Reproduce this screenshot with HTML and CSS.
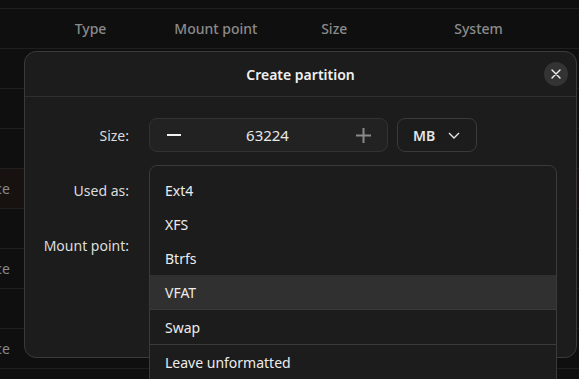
FILE: index.html
```html
<!DOCTYPE html>
<html>
<head>
<meta charset="utf-8">
<link rel="stylesheet" href="styles.css">
</head>
<body>
<div class="table">
  <div class="row head">
    <div class="cell c0"></div>
    <div class="cell c1">Type</div>
    <div class="cell c2">Mount point</div>
    <div class="cell c3">Size</div>
    <div class="cell c4">System</div>
  </div>
  <div class="row"></div>
  <div class="row"></div>
  <div class="row"></div>
  <div class="row sel"><div class="cell c0 clip">Free space</div></div>
  <div class="row"></div>
  <div class="row"><div class="cell c0 clip">Free space</div></div>
  <div class="row"></div>
  <div class="row"><div class="cell c0 clip">Free space</div></div>
  <div class="row short"></div>
</div>

<div class="dialog">
  <div class="dlg-head">
    <div class="dlg-title">Create partition</div>
    <button class="close" aria-label="Close">
      <svg width="10" height="10" viewBox="0 0 10 10"><path d="M1 1L9 9M9 1L1 9" stroke="#f2f2f2" stroke-width="1.4" stroke-linecap="round"/></svg>
    </button>
  </div>
  <div class="form">
    <div class="label">Size:</div>
    <div class="ctrls">
      <div class="spin">
        <span class="minus"></span>
        <span class="value">63224</span>
        <svg class="plus" width="15" height="15" viewBox="0 0 15 15"><path d="M7.5 0V15M0 7.5H15" stroke="#8a8a8a" stroke-width="2"/></svg>
      </div>
      <div class="unit">
        <span>MB</span>
        <svg width="12" height="7" viewBox="0 0 12 7"><path d="M1 1L6 6L11 1" fill="none" stroke="#e6e6e6" stroke-width="1.4"/></svg>
      </div>
    </div>
    <div class="label">Used as:</div>
    <div class="ctrl-empty"></div>
    <div class="label">Mount point:</div>
    <div class="ctrl-empty"></div>
  </div>
</div>

<div class="popup">
  <div class="item">Ext4</div>
  <div class="item">XFS</div>
  <div class="item">Btrfs</div>
  <div class="item hover">VFAT</div>
  <div class="item">Swap</div>
  <div class="sep"></div>
  <div class="item">Leave unformatted</div>
</div>
</body>
</html>
```

FILE: styles.css
```css
* { box-sizing: border-box; }
html, body {
  margin: 0;
  padding: 0;
  width: 579px;
  height: 379px;
  overflow: hidden;
  background: #0f0f0f;
  font-family: "Noto Sans", "Open Sans", sans-serif;
  font-size: 14px;
  color: #e6e6e6;
}
.table {
  padding-top: 8px;
}
.table .row {
  display: flex;
  height: 40px;
  border-top: 1px solid #1f1f1f;
  align-items: center;
}
.table .row.short { height: 4px; }
.row.head {
  color: #8a8a8a;
  font-weight: 500;
}
.row.sel { background: #17120f; }
.cell { text-align: center; white-space: nowrap; }
.c0 { width: 40px; }
.c1 { width: 102px; }
.c2 { width: 150px; }
.c3 { width: 88px; }
.c4 { width: 202px; }
.clip {
  width: 80px;
  margin-left: -70px;
  text-align: right;
  color: #8a8a8a;
}

.dialog {
  position: absolute;
  left: 24px;
  top: 51px;
  width: 553px;
  height: 307px;
  background: #1c1c1c;
  border: 1px solid #3a3a3a;
  border-radius: 12px;
}
.dlg-head {
  position: relative;
  height: 45px;
  border-bottom: 1px solid #2f2f2f;
  display: flex;
  align-items: center;
  justify-content: center;
}
.dlg-title {
  font-weight: 600;
  font-size: 14px;
  color: #f0f0f0;
}
.close {
  position: absolute;
  right: 8px;
  top: 10px;
  width: 24px;
  height: 24px;
  border-radius: 50%;
  border: 0;
  padding: 0;
  background: #333333;
  display: flex;
  align-items: center;
  justify-content: center;
}
.form {
  display: grid;
  grid-template-columns: 104px 1fr;
  column-gap: 20px;
  row-gap: 21px;
  padding-top: 21px;
}
.label {
  height: 34px;
  display: flex;
  align-items: center;
  justify-content: flex-end;
  color: #dcdcdc;
}
.ctrls {
  display: flex;
  gap: 9px;
}
.ctrl-empty { height: 34px; }
.spin {
  width: 239px;
  height: 34px;
  background: #222222;
  border: 1px solid #333333;
  border-radius: 8px;
  display: flex;
  align-items: center;
  padding: 0 16px 0 17px;
}
.minus {
  width: 14px;
  height: 2px;
  background: #f2f2f2;
}
.value {
  flex: 1;
  text-align: center;
  font-size: 15px;
  color: #e8e8e8;
  padding-right: 2px;
}
.unit {
  width: 80px;
  height: 34px;
  border: 1px solid #3a3a3a;
  border-radius: 8px;
  display: flex;
  align-items: center;
  gap: 13px;
  padding-left: 15px;
  font-weight: 600;
  font-size: 14px;
}

.popup {
  position: absolute;
  left: 149px;
  top: 165px;
  width: 408px;
  height: 230px;
  background: #1c1c1c;
  border: 1px solid #3a3a3a;
  border-radius: 8px 8px 0 0;
  padding-top: 7px;
}
.item {
  height: 34px;
  display: flex;
  align-items: center;
  padding-left: 15px;
  color: #ececec;
}
.item.hover {
  background: #303030;
  border-bottom: 1px solid #3a3a3a;
  height: 35px;
}
.sep {
  height: 1px;
  background: #3a3a3a;
}
```
